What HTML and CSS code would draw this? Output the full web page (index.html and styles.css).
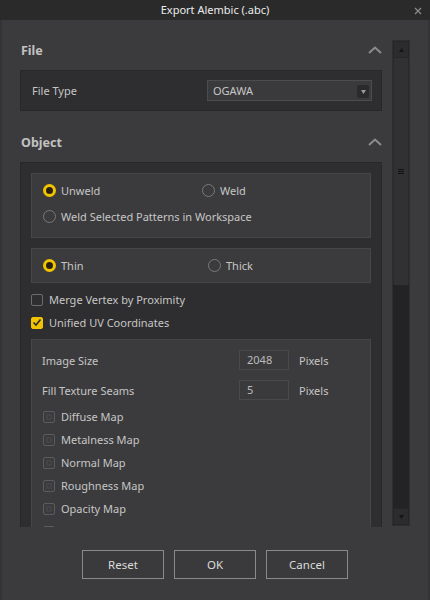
FILE: index.html
```html
<!DOCTYPE html>
<html>
<head>
<meta charset="utf-8">
<link rel="stylesheet" href="styles.css">
</head>
<body>
<div class="window">
  <div class="titlebar">
    <span class="title">Export Alembic (.abc)</span>
    <svg class="close" width="8" height="8" viewBox="0 0 8 8"><path d="M1 1L7 7M7 1L1 7" stroke="#8a8a8a" stroke-width="1.3"/></svg>
  </div>
  <div class="main">
    <div class="content">
      <div class="sec-head">
        <span>File</span>
        <svg class="chev" width="14" height="8" viewBox="0 0 14 8"><path d="M1 7L7 1.5L13 7" fill="none" stroke="#8c8c8c" stroke-width="2"/></svg>
      </div>
      <div class="panel file-panel">
        <span class="label">File Type</span>
        <div class="select">
          <span>OGAWA</span>
          <span class="sel-btn"><svg width="5" height="4" viewBox="0 0 5 4"><path d="M0 0H5L2.5 4Z" fill="#9a9a9a"/></svg></span>
        </div>
      </div>

      <div class="sec-head obj-head">
        <span>Object</span>
        <svg class="chev" width="14" height="8" viewBox="0 0 14 8"><path d="M1 7L7 1.5L13 7" fill="none" stroke="#8c8c8c" stroke-width="2"/></svg>
      </div>
      <div class="panel obj-panel">
        <div class="group g1">
          <div class="row">
            <label class="opt col1"><span class="radio on"></span>Unweld</label>
            <label class="opt"><span class="radio"></span>Weld</label>
          </div>
          <div class="row">
            <label class="opt"><span class="radio"></span>Weld Selected Patterns in Workspace</label>
          </div>
        </div>
        <div class="group g2">
          <div class="row">
            <label class="opt col1b"><span class="radio on"></span>Thin</label>
            <label class="opt"><span class="radio"></span>Thick</label>
          </div>
        </div>
        <div class="checks">
          <label class="chk-row"><span class="check"></span>Merge Vertex by Proximity</label>
          <label class="chk-row"><span class="check on"><svg width="10" height="9" viewBox="0 0 10 9"><path d="M1.5 4.5L4 7L8.5 1.5" fill="none" stroke="#2a2a2a" stroke-width="1.6"/></svg></span>Unified UV Coordinates</label>
        </div>
        <div class="group g3">
          <div class="field">
            <span class="flabel">Image Size</span>
            <span class="input">2048</span>
            <span class="unit">Pixels</span>
          </div>
          <div class="field">
            <span class="flabel">Fill Texture Seams</span>
            <span class="input">5</span>
            <span class="unit">Pixels</span>
          </div>
          <div class="maps">
            <label class="map-row"><span class="check dis"></span>Diffuse Map</label>
            <label class="map-row"><span class="check dis"></span>Metalness Map</label>
            <label class="map-row"><span class="check dis"></span>Normal Map</label>
            <label class="map-row"><span class="check dis"></span>Roughness Map</label>
            <label class="map-row"><span class="check dis"></span>Opacity Map</label>
            <label class="map-row"><span class="check dis"></span>Displacement Map</label>
          </div>
        </div>
      </div>
    </div>
    <div class="scrollbar">
      <div class="sb-btn"><svg width="5" height="4" viewBox="0 0 5 4"><path d="M0 4H5L2.5 0Z" fill="#151515"/></svg></div>
      <div class="sb-track">
        <div class="sb-thumb"><span class="grip"></span></div>
      </div>
      <div class="sb-btn"><svg width="5" height="4" viewBox="0 0 5 4"><path d="M0 0H5L2.5 4Z" fill="#151515"/></svg></div>
    </div>
  </div>
  <div class="footer">
    <button class="btn">Reset</button>
    <button class="btn">OK</button>
    <button class="btn">Cancel</button>
  </div>
</div>
</body>
</html>
```

FILE: styles.css
```css
html, body {
  margin: 0;
  padding: 0;
  background: #3b3b3d;
}
body {
  width: 430px;
  height: 600px;
  overflow: hidden;
  font-family: "Noto Sans", "Open Sans", sans-serif;
  font-size: 11px;
  color: #c6c6c6;
}
.window {
  width: 430px;
  height: 600px;
  display: flex;
  flex-direction: column;
  background: #3b3b3d;
  box-shadow: inset 2px 0 0 #343436, inset -2px 0 0 #343436;
}
.titlebar {
  height: 20px;
  flex: none;
  background: #2a2a2b;
  display: flex;
  align-items: center;
  justify-content: center;
  position: relative;
}
.title {
  color: #ececec;
  font-size: 11px;
  line-height: 20px;
}
.close {
  position: absolute;
  right: 8px;
  top: 7px;
}
.main {
  height: 507px;
  flex: none;
  display: flex;
  overflow: hidden;
}
.content {
  width: 362px;
  margin-left: 20px;
  padding-top: 20px;
  flex: none;
}
.sec-head {
  height: 20px;
  display: flex;
  align-items: center;
  justify-content: space-between;
  font-weight: bold;
  font-size: 12.5px;
  color: #c2c2c2;
  padding-left: 1px;
}
.panel {
  background: #2e2e30;
  border: 1px solid #28282a;
  box-sizing: border-box;
}
.file-panel {
  margin-top: 10px;
  height: 41px;
  display: flex;
  align-items: center;
  padding-left: 11px;
}
.label {
  width: 175px;
  flex: none;
}
.select {
  width: 165px;
  height: 21px;
  box-sizing: border-box;
  border: 1px solid #4c4c4e;
  background: #3a3a3c;
  display: flex;
  align-items: center;
  justify-content: space-between;
  padding-left: 5px;
  padding-right: 2px;
  color: #c8c8c8;
}
.sel-btn {
  width: 12px;
  height: 13px;
  background: #2a2a2c;
  border-radius: 2px;
  display: flex;
  align-items: center;
  justify-content: center;
  margin-top: 2px;
}
.obj-head {
  margin-top: 21px;
}
.obj-panel {
  margin-top: 10px;
  padding: 10px 10px 0 10px;
  height: 400px;
}
.group {
  background: #3b3b3d;
  border: 1px solid #464648;
  box-sizing: border-box;
}
.g1 {
  height: 65px;
  padding: 3px 0 0 11px;
}
.g2 {
  margin-top: 10px;
  height: 35px;
  padding: 3px 0 0 11px;
}
.row {
  height: 26px;
  display: flex;
  align-items: center;
}
.opt {
  display: flex;
  align-items: center;
}
.col1 {
  width: 159px;
}
.col1b {
  width: 165px;
}
.radio {
  width: 13px;
  height: 13px;
  box-sizing: border-box;
  border-radius: 50%;
  border: 1px solid #7a7a7a;
  margin-right: 5px;
  flex: none;
  position: relative;
}
.radio.on {
  border: 3px solid #f0c400;
  background: #2b2418;
}
.radio.on::after {
  content: "";
  position: absolute;
  left: 1px;
  top: 1px;
  width: 5px;
  height: 5px;
  border-radius: 50%;
  background: #2a1f10;
}
.checks {
  padding-top: 5px;
}
.chk-row {
  height: 23px;
  display: flex;
  align-items: center;
}
.check {
  width: 12px;
  height: 12px;
  box-sizing: border-box;
  border: 1px solid #6c6c6c;
  border-radius: 2px;
  margin-right: 6px;
  flex: none;
  display: flex;
  align-items: center;
  justify-content: center;
}
.check.on {
  background: #f0c400;
  border-color: #f0c400;
}
.check.dis {
  border-color: #5c5c5e;
  box-shadow: inset 0 0 0 2px #3b3b3d, inset 0 0 0 4px #434345;
}
.g3 {
  margin-top: 5px;
  padding: 10px 0 0 10px;
  height: 300px;
}
.field {
  height: 20px;
  display: flex;
  align-items: center;
  margin-bottom: 10px;
}
.flabel {
  width: 197px;
  flex: none;
}
.input {
  width: 50px;
  height: 20px;
  box-sizing: border-box;
  border: 1px solid #4a4a4c;
  background: #3a3a3c;
  padding-left: 7px;
  line-height: 18px;
  color: #bababa;
  margin-right: 10px;
}
.maps {
  margin-top: -5px;
}
.map-row {
  height: 23px;
  display: flex;
  align-items: center;
  padding-left: 1px;
}
.scrollbar {
  margin-left: 10px;
  margin-top: 20px;
  width: 18px;
  height: 486px;
  flex: none;
  display: flex;
  flex-direction: column;
  background: #232325;
  box-sizing: border-box;
  border: 1px solid #2e2e30;
}
.sb-btn {
  height: 17px;
  flex: none;
  background: #2c2c2e;
  border: 1px solid #262628;
  box-sizing: border-box;
  display: flex;
  align-items: center;
  justify-content: center;
}
.sb-track {
  flex: 1;
  background: #232325;
}
.sb-thumb {
  height: 227px;
  background: #313133;
  border-left: 1px solid #2a2a2c;
  border-right: 1px solid #2a2a2c;
  box-sizing: border-box;
  display: flex;
  align-items: center;
  justify-content: center;
}
.grip {
  width: 6px;
  height: 5px;
  border-top: 1px solid #111;
  border-bottom: 1px solid #111;
  box-sizing: border-box;
  position: relative;
}
.grip::after {
  content: "";
  position: absolute;
  left: 0;
  right: 0;
  top: 1px;
  border-top: 1px solid #111;
}
.footer {
  flex: 1;
  display: flex;
  justify-content: center;
  gap: 10px;
  padding-top: 23px;
}
.btn {
  width: 82px;
  height: 29px;
  box-sizing: border-box;
  border: 1px solid #8a8a8a;
  background: #3a3a3c;
  color: #dadada;
  font-family: "Noto Sans", "Open Sans", sans-serif;
  font-size: 11.5px;
  padding: 0;
}
```
